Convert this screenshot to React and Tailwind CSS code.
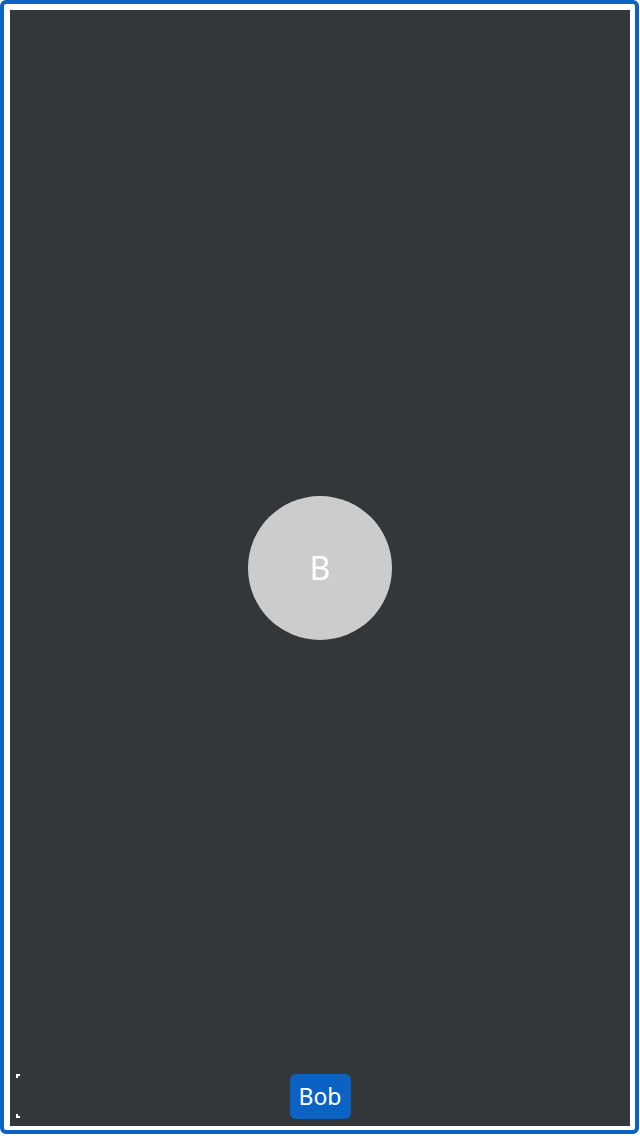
import React from "react";

function CornerMarks() {
  // tiny broken-media corner ticks at the bottom left
  return (
    <div className="flex h-[44px] w-[4px] flex-col justify-between">
      <div className="h-[4px] w-[4px] border-l-2 border-t-2 border-white" />
      <div className="h-[4px] w-[4px] border-b-2 border-l-2 border-white" />
    </div>
  );
}

export default function App() {
  return (
    <div
      className="h-[1136px] w-[640px] bg-white"
      style={{ fontFamily: '"Noto Sans", "Open Sans", sans-serif' }}
    >
      <div className="h-[1134px] w-[639px] rounded-[6px] border-4 border-[#0a63c4] pb-[4px] pl-[6px] pr-[5px] pt-[6px]">
        <div className="relative flex h-full w-full items-center justify-center bg-[#343739]">
          <div className="flex h-[144px] w-[144px] items-center justify-center rounded-full bg-[#cccccc]">
            <span className="text-[32px] leading-none text-white">B</span>
          </div>
          <div className="absolute bottom-[7px] left-[6px] right-0 flex items-end">
            <div className="mb-[1px]">
              <CornerMarks />
            </div>
            <div className="flex flex-1 justify-center pr-[10px]">
              <div className="flex h-[45px] w-[61px] items-center justify-center rounded-[6px] bg-[#0a63c4] text-[23px] text-white">
                Bob
              </div>
            </div>
          </div>
        </div>
      </div>
    </div>
  );
}
